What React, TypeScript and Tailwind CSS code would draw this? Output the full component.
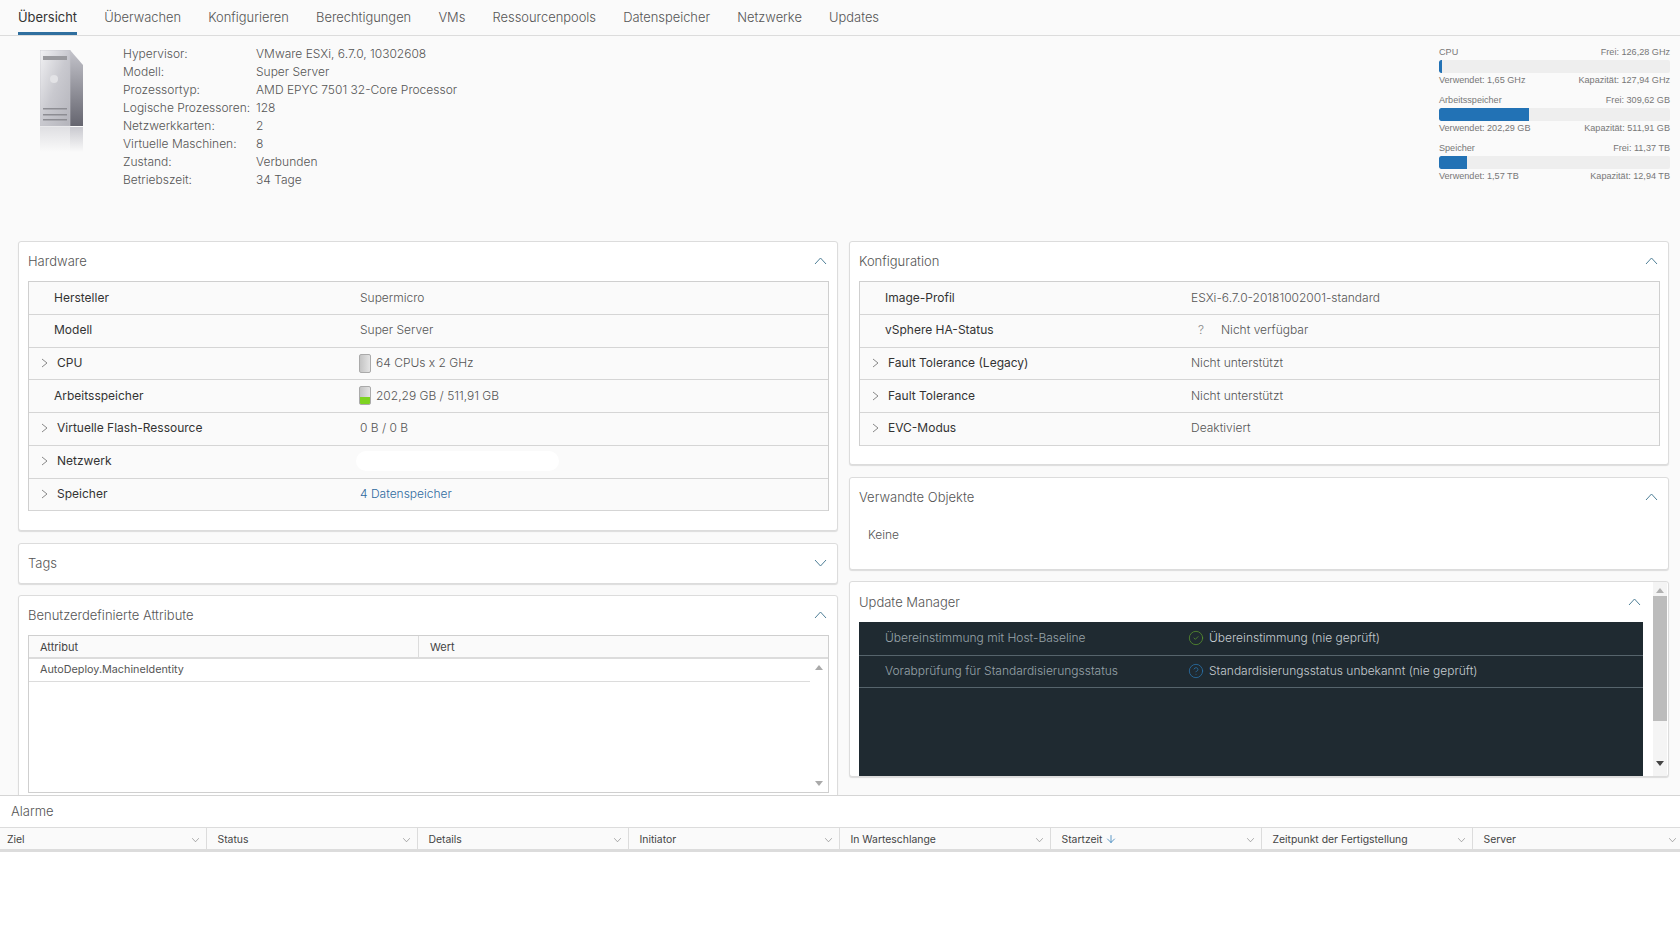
import React from 'react';
import { ArrowDown, CircleCheck, CircleHelp } from 'lucide-react';

const tabs = ['Übersicht', 'Überwachen', 'Konfigurieren', 'Berechtigungen', 'VMs', 'Ressourcenpools', 'Datenspeicher', 'Netzwerke', 'Updates'];

const summary = [
  ['Hypervisor:', 'VMware ESXi, 6.7.0, 10302608'],
  ['Modell:', 'Super Server'],
  ['Prozessortyp:', 'AMD EPYC 7501 32-Core Processor'],
  ['Logische Prozessoren:', '128'],
  ['Netzwerkkarten:', '2'],
  ['Virtuelle Maschinen:', '8'],
  ['Zustand:', 'Verbunden'],
  ['Betriebszeit:', '34 Tage'],
];

const meters = [
  { name: 'CPU', free: 'Frei: 126,28 GHz', used: 'Verwendet: 1,65 GHz', cap: 'Kapazität: 127,94 GHz', fill: 'w-[3px]' },
  { name: 'Arbeitsspeicher', free: 'Frei: 309,62 GB', used: 'Verwendet: 202,29 GB', cap: 'Kapazität: 511,91 GB', fill: 'w-[90px]' },
  { name: 'Speicher', free: 'Frei: 11,37 TB', used: 'Verwendet: 1,57 TB', cap: 'Kapazität: 12,94 TB', fill: 'w-[28px]' },
];

const alarmCols = ['Ziel', 'Status', 'Details', 'Initiator', 'In Warteschlange', 'Startzeit', 'Zeitpunkt der Fertigstellung', 'Server'];

const ServerIcon = () => (
  <svg width="44" height="102" viewBox="0 0 44 102">
    <defs>
      <linearGradient id="front" x1="0" y1="0" x2="1" y2="1">
        <stop offset="0" stopColor="#f2f2f4" />
        <stop offset="0.5" stopColor="#c9c9cf" />
        <stop offset="1" stopColor="#b4b4bb" />
      </linearGradient>
      <linearGradient id="side" x1="0" y1="0" x2="0" y2="1">
        <stop offset="0" stopColor="#c4c4cb" />
        <stop offset="1" stopColor="#65656f" />
      </linearGradient>
      <linearGradient id="fade" x1="0" y1="0" x2="0" y2="1">
        <stop offset="0" stopColor="#c9c9cf" />
        <stop offset="1" stopColor="#fafafa" />
      </linearGradient>
    </defs>
    <polygon points="30,0 43,15 43,76 30,76" fill="url(#side)" />
    <rect x="0" y="0" width="30" height="76" fill="url(#front)" stroke="#c4c4c8" strokeWidth="0.6" />
    <rect x="3" y="6" width="24" height="4" fill="#9a9a9e" />
    <circle cx="14" cy="29" r="4" fill="#e3e3e6" />
    <rect x="3" y="58" width="24" height="1.5" fill="#8d8d93" />
    <rect x="3" y="64" width="24" height="1.5" fill="#8d8d93" />
    <rect x="3" y="69" width="24" height="1.5" fill="#8d8d93" />
    <rect x="0" y="77" width="30" height="25" fill="url(#fade)" opacity="0.55" />
    <rect x="30" y="77" width="13" height="25" fill="url(#fade)" />
  </svg>
);

const Chevron = ({ dir, className }: { dir: 'up' | 'down' | 'right'; className?: string }) => {
  const points = dir === 'up' ? '1,8 6.5,2 12,8' : dir === 'down' ? '1,2 6.5,8 12,2' : '4,1 9,5 4,9';
  return (
    <svg width="13" height="10" viewBox="0 0 13 10" fill="none" className={className}>
      <polyline points={points} stroke="currentColor" strokeWidth="1" />
    </svg>
  );
};

const Card = ({ title, open = true, className, children }: { title: string; open?: boolean; className?: string; children?: React.ReactNode }) => (
  <div className={`bg-white border border-[#dcdcdc] rounded-[3px] shadow-[0_1px_1px_rgba(0,0,0,0.12)] pl-[9px] pr-[8px] overflow-hidden ${className}`}>
    <div className="h-[39px] pb-[1px] flex items-center justify-between text-[13px] font-light text-[#555]">
      <span>{title}</span>
      <Chevron dir={open ? 'up' : 'down'} className="text-[#4f7f97] mr-[2px]" />
    </div>
    {children}
  </div>
);

const Row = ({ label, expand, children }: { label: string; expand?: boolean; children?: React.ReactNode }) => (
  <div className="grid grid-cols-[331px_1fr] items-center h-[32.71px] pb-[1px] border-b border-[#d5d5d5] text-[12px]">
    <div className={`flex items-center text-[#333] ${expand ? 'pl-[9px]' : 'pl-[25px]'}`}>
      {expand && <Chevron dir="right" className="text-[#888] mr-[6px]" />}
      {label}
    </div>
    <div className="flex items-center font-light text-[#555]">{children}</div>
  </div>
);

const RowTable = ({ children }: { children: React.ReactNode }) => (
  <div className="bg-[#fafafa] border-t border-l border-r border-[#cfcfcf]">{children}</div>
);

const Gauge = ({ filled }: { filled?: boolean }) => (
  <span className="relative w-[12px] h-[19px] -ml-[1px] mr-[5px] rounded-[2px] border border-[#aaa] bg-gradient-to-r from-[#c4c4c4] to-[#e4e4e4] overflow-hidden">
    {filled && <span className="absolute left-0 right-0 bottom-0 h-[7px] bg-[#7ed321]" />}
  </span>
);

export default function App() {
  return (
    <div className="w-[1680px] h-[945px] overflow-hidden bg-white font-['Inter',sans-serif] flex flex-col">
      <div className="h-[36px] shrink-0 bg-[#fafafa] border-b border-[#dcdcdc] flex gap-[27.2px] pl-[18px] text-[12.9px] font-light text-[#555]">
        {tabs.map((t, i) => (
          <div key={t} className={`h-[35px] flex items-center border-b-[3px] pt-[4px] ${i === 0 ? 'border-[#2f6f9f] font-normal text-[#333]' : 'border-transparent'}`}>
            {t}
          </div>
        ))}
      </div>

      <div className="h-[759px] shrink-0 bg-[#fafafa] overflow-hidden">
        <div className="h-[205.3px] flex justify-between">
          <div className="flex">
            <div className="ml-[40px] mt-[14px] w-[83px]">
              <ServerIcon />
            </div>
            <div className="pt-[9px] text-[12px] font-light text-[#555]">
              {summary.map(([k, v]) => (
                <div key={k} className="h-[18px] flex items-center whitespace-nowrap">
                  <span className="w-[133px]">{k}</span>
                  <span>{v}</span>
                </div>
              ))}
            </div>
          </div>
          <div className="w-[231px] mr-[10px] pt-[9px] font-['Liberation_Sans',sans-serif] text-[9.1px] text-[#777]">
            {meters.map((m) => (
              <div key={m.name} className="h-[48px]">
                <div className="h-[15px] pt-[1px] flex justify-between items-center"><span>{m.name}</span><span>{m.free}</span></div>
                <div className="h-[13px] bg-[#eeeeee] rounded-[2px] overflow-hidden">
                  <div className={`h-full bg-[#2272b5] rounded-l-[2px] ${m.fill}`} />
                </div>
                <div className="h-[15px] pt-[1px] flex justify-between items-center"><span>{m.used}</span><span>{m.cap}</span></div>
              </div>
            ))}
          </div>
        </div>

        <div className="flex pl-[18px] gap-[11px]">
          <div className="w-[820px] flex flex-col">
            <Card title="Hardware" className="h-[290px] mb-[12px]">
              <RowTable>
                <Row label="Hersteller">Supermicro</Row>
                <Row label="Modell">Super Server</Row>
                <Row label="CPU" expand><Gauge />64 CPUs x 2 GHz</Row>
                <Row label="Arbeitsspeicher"><Gauge filled />202,29 GB / 511,91 GB</Row>
                <Row label="Virtuelle Flash-Ressource" expand>0 B / 0 B</Row>
                <Row label="Netzwerk" expand>
                  <span className="w-[203px] h-[20px] -ml-[4px] rounded-full bg-white" />
                </Row>
                <Row label="Speicher" expand><span className="text-[#2f6a9f]">4 Datenspeicher</span></Row>
              </RowTable>
            </Card>
            <Card title="Tags" open={false} className="h-[41px] mb-[11px]" />
            <Card title="Benutzerdefinierte Attribute" className="h-[220px]">
              <div className="h-[158px] border-t border-l border-r border-b border-[#cfcfcf] flex flex-col relative">
                <div className="h-[23px] shrink-0 flex items-center bg-[#fafafa] border-b-2 border-[#dcdcdc] text-[11px] text-[#444]">
                  <div className="w-[390px] h-full pl-[11px] flex items-center border-r border-[#dcdcdc]">Attribut</div>
                  <div className="pl-[11px]">Wert</div>
                </div>
                <div className="h-[23px] mr-[18px] pl-[11px] flex items-center border-b border-[#dcdcdc] text-[10.8px] text-[#555]">AutoDeploy.MachineIdentity</div>
                <span className="absolute right-[5px] top-[29px] w-0 h-0 border-x-[4px] border-x-transparent border-b-[5px] border-b-[#aaa]" />
                <span className="absolute right-[5px] bottom-[6px] w-0 h-0 border-x-[4px] border-x-transparent border-t-[5px] border-t-[#aaa]" />
              </div>
            </Card>
          </div>

          <div className="w-[820px] flex flex-col">
            <Card title="Konfiguration" className="h-[224px] mb-[12px]">
              <RowTable>
                <Row label="Image-Profil">ESXi-6.7.0-20181002001-standard</Row>
                <Row label="vSphere HA-Status"><span className="w-[30px] pl-[7px] text-[#888]">?</span>Nicht verfügbar</Row>
                <Row label="Fault Tolerance (Legacy)" expand>Nicht unterstützt</Row>
                <Row label="Fault Tolerance" expand>Nicht unterstützt</Row>
                <Row label="EVC-Modus" expand>Deaktiviert</Row>
              </RowTable>
            </Card>
            <Card title="Verwandte Objekte" className="h-[93px] mb-[11px]">
              <div className="pt-[9px] pl-[9px] text-[12px] font-light text-[#555]">Keine</div>
            </Card>
            <div className="h-[196px] flex bg-white border border-[#dcdcdc] rounded-[3px] shadow-[0_1px_1px_rgba(0,0,0,0.12)] overflow-hidden">
              <div className="w-[793px] pl-[9px] flex flex-col">
                <div className="h-[40px] shrink-0 flex items-center justify-between text-[13px] font-light text-[#555]">
                  <span>Update Manager</span>
                  <Chevron dir="up" className="text-[#4f7f97] mr-[2px]" />
                </div>
                <div className="flex-1 bg-[#1f2a31] text-[12px]">
                  <div className="grid grid-cols-[329px_1fr] items-center h-[33.5px] pb-[1px] border-b border-[#56646c]">
                    <span className="pl-[26px] font-light text-[#98a3a9]">Übereinstimmung mit Host-Baseline</span>
                    <span className="flex items-center gap-[5px] font-light text-[#c5ccd0]">
                      <CircleCheck size={16} strokeWidth={1.1} className="text-[#5c9a2e]" />
                      Übereinstimmung (nie geprüft)
                    </span>
                  </div>
                  <div className="grid grid-cols-[329px_1fr] items-center h-[32px] border-b border-[#56646c]">
                    <span className="pl-[26px] font-light text-[#98a3a9]">Vorabprüfung für Standardisierungsstatus</span>
                    <span className="flex items-center gap-[5px] font-light text-[#c5ccd0]">
                      <CircleHelp size={16} strokeWidth={1.1} className="text-[#2a78b5]" />
                      Standardisierungsstatus unbekannt (nie geprüft)
                    </span>
                  </div>
                </div>
              </div>
              <div className="ml-auto w-[14px] mr-[1px] bg-[#f4f4f4] flex flex-col items-center">
                <span className="mt-[6px] w-0 h-0 border-x-[4px] border-x-transparent border-b-[5px] border-b-[#b0b0b0]" />
                <div className="mt-[3px] w-full h-[125px] bg-[#bcbcbc]" />
                <span className="mt-[40px] w-0 h-0 border-x-[4px] border-x-transparent border-t-[5px] border-t-[#444]" />
              </div>
            </div>
          </div>
        </div>
      </div>

      <div className="flex-1 bg-white border-t border-[#d5d5d5]">
        <div className="h-[31px] pl-[11px] flex items-center text-[13px] font-light text-[#555]">Alarme</div>
        <div className="h-[25px] flex bg-[#fafafa] border-t border-b-[3px] border-[#dcdcdc] text-[10.4px] text-[#444] overflow-hidden">
          {alarmCols.map((c, i) => (
            <div key={c} className={`shrink-0 h-full pt-[2px] flex items-center justify-between border-r border-[#dcdcdc] ${i === 0 ? 'w-[206.5px] pl-[7px]' : 'w-[211px] pl-[11px]'} pr-[4px]`}>
              <span className="flex items-center gap-[3px]">
                {c}
                {c === 'Startzeit' && <ArrowDown size={12} strokeWidth={1.5} className="text-[#2a78b5]" />}
              </span>
              <Chevron dir="down" className="text-[#777] scale-[0.6]" />
            </div>
          ))}
        </div>
      </div>
    </div>
  );
}
